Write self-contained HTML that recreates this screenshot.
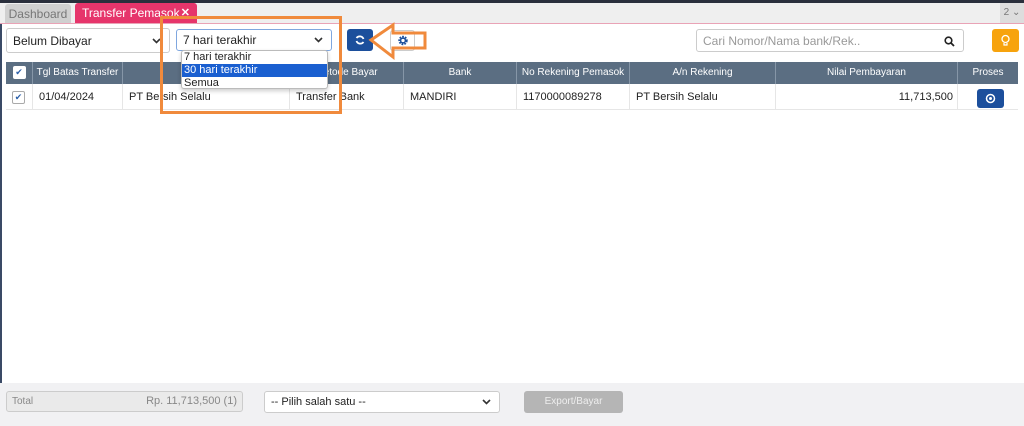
<!DOCTYPE html>
<html><head><meta charset="utf-8"><style>
*{box-sizing:border-box;margin:0;padding:0}
body{width:1024px;height:426px;overflow:hidden;background:#fff;font-family:"Liberation Sans",sans-serif;font-size:11px;color:#222;position:relative}
.abs{position:absolute}
.sel{position:absolute;background:#fff;border:1px solid #ccc;border-radius:3px;font-size:12px;padding:0 6px;color:#222;display:flex;align-items:center;white-space:nowrap}
.car{position:absolute;right:8px;top:50%;margin-top:-3px}
.hd{position:absolute;top:62px;height:22px;background:#5b6e82;color:#fff;font-size:10px;line-height:22px;text-align:center;border-right:1px solid #8696a7;white-space:nowrap}
.cl{position:absolute;top:84px;height:26px;line-height:26px;font-size:11px;border-right:1px solid #e6e6e6;border-bottom:1px solid #e6e6e6;padding-left:6px;white-space:nowrap}
</style></head><body>
<div class="abs" style="left:0;top:0;width:1024px;height:3px;background:#2a2f3c"></div>
<div class="abs" style="left:0;top:3px;width:1024px;height:20px;background:#efefef"></div>
<div class="abs" style="left:0;top:23px;width:1024px;height:1px;background:#e9a3b6"></div>
<div class="abs" style="left:5px;top:4px;width:66px;height:19px;background:#d0d0d0;border-radius:3px 3px 0 0;color:#777;font-size:12px;line-height:20px;text-align:center">Dashboard</div>
<div class="abs" style="left:75px;top:3px;width:122px;height:20px;background:#e6356b;border-radius:3px 3px 0 0;color:#fff;font-size:12px;line-height:21px;padding-left:7px;white-space:nowrap;overflow:hidden">Transfer Pemasok<span style="position:absolute;right:7px;top:0;font-weight:bold;font-size:11px">✕</span></div>
<div class="abs" style="left:1000px;top:3px;width:24px;height:20px;background:#ddd;color:#777;font-size:10px;line-height:20px;text-align:center">2 ⌄</div>
<div class="abs" style="left:0;top:24px;width:2px;height:360px;background:#3a4a66"></div>

<svg width="0" height="0" style="position:absolute"><defs><path id="chev" d="M1 1 L4.5 4.5 L8 1" fill="none" stroke="#333" stroke-width="1.6"/></defs></svg>

<div class="sel" style="left:6px;top:28px;width:164px;height:25px">Belum Dibayar<svg class="car" width="9" height="6"><use href="#chev"/></svg></div>
<div class="sel" style="left:176px;top:29px;width:156px;height:22px;border-color:#7fa7df">7 hari terakhir<svg class="car" width="9" height="6"><use href="#chev"/></svg></div>
<div class="abs" style="left:347px;top:29px;width:26px;height:22px;background:#1c4f9c;border-radius:3px">
<svg width="26" height="22"><path d="M9.5 9 A4 4 0 0 1 16.5 10 M16.5 13 A4 4 0 0 1 9.5 12" fill="none" stroke="#fff" stroke-width="1.8"/></svg></div>
<div class="abs" style="left:390px;top:30px;width:25px;height:21px;background:#fff;border:1px solid #ccc;border-radius:3px">
<svg width="23" height="19"><circle cx="12" cy="9.5" r="3.5" fill="none" stroke="#1c4f9c" stroke-width="2.4" stroke-dasharray="1.6 1"/><circle cx="12" cy="9.5" r="2.4" fill="none" stroke="#1c4f9c" stroke-width="1.5"/></svg></div>
<div class="sel" style="left:696px;top:29px;width:268px;height:23px;color:#999">Cari Nomor/Nama bank/Rek..<svg class="car" style="margin-top:-5px" width="11" height="11"><circle cx="4.5" cy="4.5" r="3.3" fill="none" stroke="#222" stroke-width="1.6"/><path d="M7 7 L10 10" stroke="#222" stroke-width="1.8"/></svg></div>
<div class="abs" style="left:992px;top:29px;width:27px;height:23px;background:#f7a30d;border-radius:3px">
<svg width="27" height="23"><circle cx="13.5" cy="10" r="3.5" fill="none" stroke="#fff" stroke-width="1.3"/><path d="M12 14 L12 16 L15 16 L15 14" fill="none" stroke="#fff" stroke-width="1.2"/></svg></div>

<div class="hd" style="left:6px;width:27px"><span style="display:inline-block;width:13px;height:13px;background:#fff;border-radius:2px;color:#2a5ea8;line-height:13px;font-size:9px;vertical-align:middle">✔</span></div>
<div class="hd" style="left:33px;width:90px">Tgl Batas Transfer</div>
<div class="hd" style="left:123px;width:167px">Pemasok</div>
<div class="hd" style="left:290px;width:114px">Metode Bayar</div>
<div class="hd" style="left:404px;width:113px">Bank</div>
<div class="hd" style="left:517px;width:113px">No Rekening Pemasok</div>
<div class="hd" style="left:630px;width:146px">A/n Rekening</div>
<div class="hd" style="left:776px;width:182px">Nilai Pembayaran</div>
<div class="hd" style="left:958px;width:60px;border-right:none">Proses</div>

<div class="cl" style="left:6px;width:27px;padding-left:6px"><span style="display:inline-block;width:13px;height:13px;border:1px solid #aaa;border-radius:2px;color:#2a5ea8;line-height:11px;font-size:9px;text-align:center;vertical-align:middle">✔</span></div>
<div class="cl" style="left:33px;width:90px">01/04/2024</div>
<div class="cl" style="left:123px;width:167px">PT Bersih Selalu</div>
<div class="cl" style="left:290px;width:114px">Transfer Bank</div>
<div class="cl" style="left:404px;width:113px">MANDIRI</div>
<div class="cl" style="left:517px;width:113px">1170000089278</div>
<div class="cl" style="left:630px;width:146px">PT Bersih Selalu</div>
<div class="cl" style="left:776px;width:182px;text-align:right;padding-right:4px">11,713,500</div>
<div class="cl" style="left:958px;width:60px;border-right:none"><span style="position:absolute;left:19px;top:5px;width:27px;height:19px;background:#1c4f9c;border-radius:3px">
<svg width="27" height="19"><circle cx="13.5" cy="9.5" r="4" fill="none" stroke="#fff" stroke-width="1.5"/><circle cx="13.5" cy="9.5" r="1.5" fill="#fff"/></svg></span></div>

<div class="abs" style="left:181px;top:50px;width:147px;height:39px;background:#fff;border:1px solid #bbb;border-radius:3px;box-shadow:0 2px 4px rgba(0,0,0,.2);font-size:11px;line-height:13px">
<div style="padding-left:2px">7 hari terakhir</div>
<div style="padding-left:2px;background:#1a5fd0;color:#fff">30 hari terakhir</div>
<div style="padding-left:2px">Semua</div></div>

<div class="abs" style="left:0;top:383px;width:1024px;height:43px;background:#f1f1f3"></div>
<div class="abs" style="left:6px;top:391px;width:237px;height:21px;background:#eaeaea;border:1px solid #ccc;border-radius:3px;color:#888;font-size:10px;line-height:19px;padding:0 5px">Total<span style="float:right;font-size:11px">Rp. 11,713,500 (1)</span></div>
<div class="sel" style="left:264px;top:391px;width:236px;height:22px;font-size:11px">-- Pilih salah satu --<svg class="car" width="9" height="6"><use href="#chev"/></svg></div>
<div class="abs" style="left:524px;top:391px;width:99px;height:22px;background:#b5b5b5;border-radius:3px;color:#eee;font-size:10px;line-height:22px;text-align:center">Export/Bayar</div>

<svg class="abs" style="left:0;top:0" width="1024" height="426">
<rect x="161.5" y="17.5" width="179" height="95" fill="none" stroke="#f08a3c" stroke-width="3"/>
<path d="M371 40 L393 25 L393 33 L425 33 L425 48 L393 48 L393 57 Z" fill="none" stroke="#f08a3c" stroke-width="3" stroke-linejoin="miter"/>
</svg>
</body></html>
